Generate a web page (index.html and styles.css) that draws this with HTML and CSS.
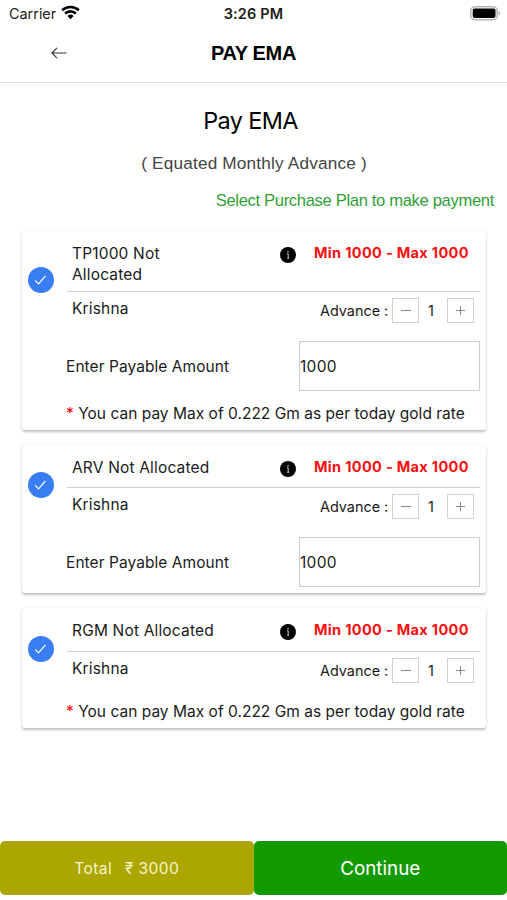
FILE: index.html
```html
<!DOCTYPE html>
<html lang="en">
<head>
<meta charset="utf-8">
<title>Pay EMA</title>
<link rel="stylesheet" href="styles.css">
</head>
<body>
<svg class="defs" width="0" height="0">
  <symbol id="check" viewBox="0 0 26 26"><circle cx="13" cy="13" r="13" fill="#397df3"/><path d="M7.2 13.4l3.3 3.4 7-8" fill="none" stroke="#fff" stroke-width="1.2"/></symbol>
  <symbol id="info" viewBox="0 0 16 16"><circle cx="8" cy="8" r="8"/><path d="M7 6.8h1.2v4.6M7.2 11.2h2" fill="none" stroke="#ccc" stroke-width="1"/><circle cx="8" cy="4.8" r=".8" fill="#ccc"/></symbol>
  <symbol id="minus" viewBox="0 0 10 10"><path d="M0 4.5h10" stroke="#888"/></symbol>
  <symbol id="plus" viewBox="0 0 10 10"><path d="M0 4.5h9M4.5 0v9" stroke="#888"/></symbol>
</svg>
<div class="status">
  <div class="carrier"><span>Carrier</span>
    <svg width="19" height="15" viewBox="0 0 19 15"><g fill="none" stroke="#000" stroke-width="2.6"><path d="M1.2 5.3a12 12 0 0 1 16.6 0"/><path d="M4.1 8.5a7.8 7.8 0 0 1 10.8 0"/></g><path d="M6.4 11a4.6 4.6 0 0 1 6.2 0L9.5 14.3z"/></svg>
  </div>
  <div class="time">3:26 PM</div>
  <svg class="battery" width="31" height="15" viewBox="0 0 31 15"><rect x=".8" y=".8" width="26.4" height="13" rx="4" fill="#fff" stroke="#b5b5b5" stroke-width="1.5"/><rect x="2.7" y="2.6" width="22.8" height="9.4" rx="2"/><path d="M28.6 5q3 2.3 0 4.6z" fill="#aaa"/></svg>
</div>
<header class="nav">
  <svg class="back" width="16" height="12" viewBox="0 0 16 12"><path d="M15.5 6H1M6 .8L.9 6 6 11.2" fill="none" stroke="#333" stroke-width="1.1"/></svg>
  <h1>PAY EMA</h1>
</header>
<main>
  <h2>Pay EMA</h2>
  <p class="sub">( Equated Monthly Advance )</p>
  <p class="hint">Select Purchase Plan to make payment</p>

  <section class="card tall">
    <svg class="check"><use href="#check"/></svg>
    <div class="content">
      <div class="head"><div class="title">TP1000 Not Allocated</div><svg class="info"><use href="#info"/></svg><div class="range">Min 1000 - Max 1000</div></div>
      <div class="row"><div class="name">Krishna</div><div class="label">Advance :</div><button><svg><use href="#minus"/></svg></button><div class="count">1</div><button><svg><use href="#plus"/></svg></button></div>
      <div class="pay"><div class="paylabel">Enter Payable Amount</div><div class="field">1000</div></div>
      <div class="note"><span class="star">*</span> You can pay Max of 0.222 Gm as per today gold rate</div>
    </div>
  </section>

  <section class="card">
    <svg class="check"><use href="#check"/></svg>
    <div class="content">
      <div class="head"><div class="title">ARV Not Allocated</div><svg class="info"><use href="#info"/></svg><div class="range">Min 1000 - Max 1000</div></div>
      <div class="row"><div class="name">Krishna</div><div class="label">Advance :</div><button><svg><use href="#minus"/></svg></button><div class="count">1</div><button><svg><use href="#plus"/></svg></button></div>
      <div class="pay"><div class="paylabel">Enter Payable Amount</div><div class="field">1000</div></div>
    </div>
  </section>

  <section class="card last">
    <svg class="check"><use href="#check"/></svg>
    <div class="content">
      <div class="head"><div class="title">RGM Not Allocated</div><svg class="info"><use href="#info"/></svg><div class="range">Min 1000 - Max 1000</div></div>
      <div class="row"><div class="name">Krishna</div><div class="label">Advance :</div><button><svg><use href="#minus"/></svg></button><div class="count">1</div><button><svg><use href="#plus"/></svg></button></div>
      <div class="note"><span class="star">*</span> You can pay Max of 0.222 Gm as per today gold rate</div>
    </div>
  </section>
</main>
<footer><div class="total"><span>Total</span><span>₹ 3000</span></div><div class="continue">Continue</div></footer>
</body>
</html>
```

FILE: styles.css
```css
* { box-sizing: border-box; margin: 0; padding: 0; }
body { width: 507px; height: 900px; display: flex; flex-direction: column; background: #fff; color: #1a1a1a; font-family: Inter, "Liberation Sans", sans-serif; font-size: 15.5px; line-height: 21px; white-space: nowrap; overflow: hidden; }
.defs { display: none; }
svg { display: block; flex: none; }
.status { height: 28px; display: grid; grid-template-columns: 1fr auto 1fr; align-items: center; padding: 0 6px 0 9px; }
.carrier { display: flex; align-items: center; gap: 5px; font-size: 14.4px; color: #222; }
.carrier span { margin-top: -2px; }
.carrier svg { margin-top: -3px; }
.time { font-size: 14.5px; font-weight: 600; letter-spacing: .15px; margin: -2px 3px 0 0; }
.battery { justify-self: end; margin-top: -1px; }
.nav { height: 55px; display: grid; grid-template-columns: 1fr auto 1fr; align-items: center; border-bottom: 1px solid #dedede; padding-bottom: 4px; }
.back { margin-left: 51px; }
h1 { font: 700 20px/24px "Liberation Sans", sans-serif; letter-spacing: -.35px; color: #000; grid-column: 2; }
main { flex: 1; padding: 0 21px 0 22px; }
h2 { font-size: 23.4px; font-weight: 400; line-height: 30px; letter-spacing: -.6px; margin: 23px 7px 0 0; text-align: center; color: #000; }
.sub { font: 300 17.2px/22px "Liberation Sans", sans-serif; letter-spacing: .18px; text-align: center; margin-top: 16px; color: #444; }
.hint { font: 400 16.6px/22px "Liberation Sans", sans-serif; letter-spacing: -.34px; text-align: right; margin: 16px -8px 0 0; color: #2f9f36; }
.card { display: flex; width: 464px; margin-bottom: 15px; background: #fff; border-radius: 3px; box-shadow: 0 1.5px 2.5px rgba(0, 0, 0, .25); padding-left: 6px; }
.hint + .card { margin-top: 19px; }
.check { width: 26px; height: 26px; margin-top: 27px; }
.last .check { margin-top: 28px; }
.tall .check { margin-top: 36px; }
.content { margin-left: 13px; width: 413px; }
.head { height: 43px; border-bottom: 1px solid #d0d0d0; display: flex; align-items: flex-start; padding: 12px 0 0 5px; }
.tall .head { height: 61px; }
.last .head { height: 44px; }
.title { width: 130px; letter-spacing: .17px; white-space: normal; }
.card:not(.tall) .title { width: 208px; white-space: nowrap; }
.tall .title { margin-right: 78px; }
.info { width: 16px; height: 16px; margin-top: 4px; }
.range { margin-left: 18px; margin-top: -1px; font-weight: 700; font-size: 14.5px; letter-spacing: .33px; color: #fa1010; }
.row { display: flex; height: 49px; padding: 6px 5px 0; align-items: flex-start; }
.name { width: 248px; letter-spacing: .17px; }
.label { width: 72px; font-size: 14.4px; margin-top: 2px; }
button { width: 27px; height: 25px; border: 1px solid #d2d2d2; background: #fff; display: grid; place-items: center; }
button svg { width: 10px; height: 10px; }
.count { width: 28px; text-align: center; margin-top: 2px; padding-right: 4px; font-size: 14.5px; }
.pay { display: flex; align-items: center; padding-bottom: 6px; }
.tall .pay { padding-bottom: 12px; }
.paylabel { width: 233px; margin-left: -1px; letter-spacing: .06px; }
.field { width: 181px; height: 50px; border: 1px solid #ccc; line-height: 49px; letter-spacing: .3px; }
.note { height: 27px; margin-left: -1px; letter-spacing: .02px; }
.star { color: #f00; }
footer { display: flex; height: 54px; margin-bottom: 5px; color: #fff; flex: none; }
footer div { flex: 1; display: flex; justify-content: center; align-items: center; border-radius: 5px; }
.total { background: #aca600; gap: 13px; color: #f8f5c8; font-size: 15.5px; letter-spacing: .4px; }
.continue { background: #139a00; font-size: 18.8px; }
```
